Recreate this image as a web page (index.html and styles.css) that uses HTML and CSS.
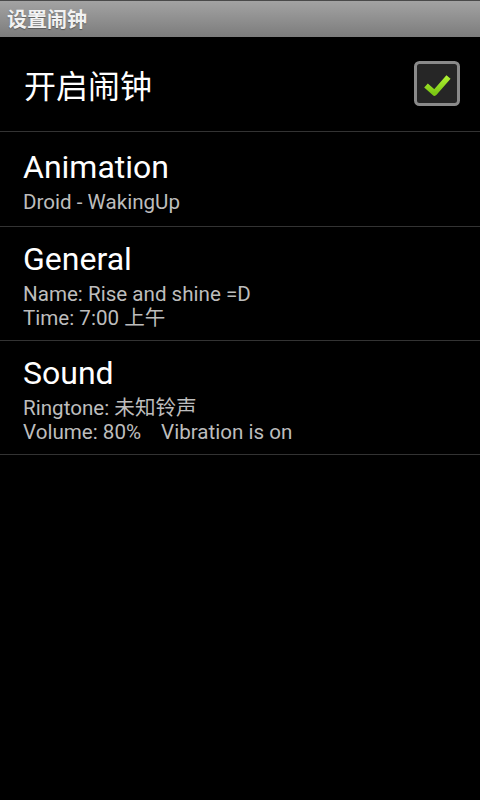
FILE: index.html
```html
<!DOCTYPE html>
<html lang="zh-CN">
<head>
  <meta charset="UTF-8" />
  <meta name="viewport" content="width=device-width, initial-scale=1" />
  <title>设置闹钟</title>
  <link rel="stylesheet" href="styles.css">
</head>
<body>
  <div class="titlebar">设置闹钟</div>

  <div class="pref pref-switch">
    <span class="pref-label">开启闹钟</span>
    <span class="checkbox">
      <svg width="46" height="46" viewBox="0 0 46 46">
        <defs>
          <linearGradient id="tick" x1="0" y1="0" x2="0" y2="1">
            <stop offset="0" stop-color="#aef032" />
            <stop offset="1" stop-color="#7cc814" />
          </linearGradient>
        </defs>
        <rect x="1.5" y="1.5" width="43" height="42" rx="4" fill="#262626" stroke="#8a8a8a" stroke-width="3" />
        <polyline points="12,24.5 20.5,32 34.5,16" fill="none" stroke="url(#tick)" stroke-width="5.5" stroke-linejoin="round" />
      </svg>
    </span>
  </div>

  <div class="pref">
    <div class="pref-title">Animation</div>
    <div class="pref-summary">Droid - WakingUp</div>
  </div>

  <div class="pref">
    <div class="pref-title">General</div>
    <div class="pref-summary">Name: Rise and shine =D<br>Time: 7:00 上午</div>
  </div>

  <div class="pref">
    <div class="pref-title">Sound</div>
    <div class="pref-summary">Ringtone: 未知铃声<br>Volume: 80%<span class="gap"></span>Vibration is on</div>
  </div>
</body>
</html>
```

FILE: styles.css
```css
body {
  margin: 0;
  background: #000;
  color: #fff;
  font-family: Roboto, "Noto Sans CJK SC", sans-serif;
}
.titlebar {
  height: 36px;
  line-height: 35px;
  padding-left: 7px;
  border-top: 1px solid #4a4a4a;
  background: linear-gradient(to bottom, #a3a3a3, #7c7c7c);
  color: #f2f2f2;
  font-family: "Noto Sans CJK SC", sans-serif;
  font-size: 20px;
  font-weight: bold;
  text-shadow: 0 1px 1px rgba(0,0,0,0.35);
}
.pref {
  box-sizing: border-box;
  display: flex;
  flex-direction: column;
  justify-content: center;
  min-height: 95px;
  padding: 13px 24px 10px 23px;
  border-bottom: 1px solid #333;
}
.pref-switch {
  flex-direction: row;
  align-items: center;
  justify-content: space-between;
  padding: 0 20px 0 24px;
}
.pref-label {
  font-family: "Noto Sans CJK SC", sans-serif;
  font-size: 32px;
  line-height: 40px;
}
.checkbox {
  display: flex;
  width: 46px;
  height: 46px;
}
.pref-title {
  font-size: 32px;
  line-height: 38px;
}
.pref-summary {
  margin-top: 4px;
  font-size: 20.6px;
  line-height: 24px;
  color: #bdbdbd;
}
.gap {
  display: inline-block;
  width: 20px;
}
```
